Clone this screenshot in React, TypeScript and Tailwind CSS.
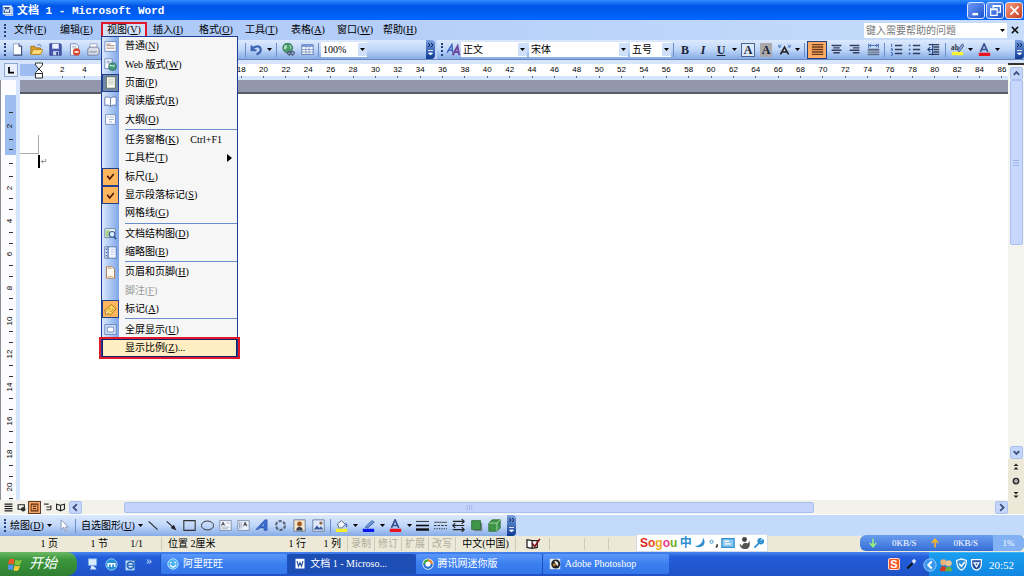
import React from "react";

type Kids = { children?: React.ReactNode };

/** Menu style label: an access key written "(X)" is drawn with its letter underlined. */
function Label({ text }: { text: string }) {
  const key = text.match(/^(.*\()([A-Z])(\).*)$/);
  return (
    <span className="whitespace-pre">
      {key ? (
        <>
          {key[1]}
          <u>{key[2]}</u>
          {key[3]}
        </>
      ) : (
        text
      )}
    </span>
  );
}

function Ico({ children, className = "size-[13px]" }: Kids & { className?: string }) {
  return (
    <svg viewBox="0 0 16 16" className={`${className} shrink-0`} fill="none" stroke="none" aria-hidden="true">
      {children}
    </svg>
  );
}

const sheet = <path d="M3 1h7l3 3v11H3z" fill="#fff" stroke="#5a76a8" />;
const lines = (ys: number[], x1 = 2, x2 = 14, c = "#333f5c") => (
  <path d={ys.map((y) => `M${x1} ${y}H${x2}`).join("")} stroke={c} strokeWidth="1.8" />
);

const icons: Record<string, React.ReactNode> = {
  newDoc: <><path d="M3 1h7l3 3v11H3z" fill="#fff" stroke="#8798bd" /><path d="M10 1v3h3v11H3" stroke="#3c4f80" strokeWidth="1.4" /></>,
  open: <><path d="M1 4h5l1 2h6v8H1z" fill="#e0a02c" stroke="#9c6a14" /><path d="M4 8h12l-3 6H1z" fill="#ffdc78" stroke="#b07c1c" /><path d="M9 3c2-2 4-1 5 1" stroke="#35558f" /></>,
  save: <><path d="M1 1h13l1 1v13H1z" fill="#4858ac" stroke="#2c3a84" /><path d="M4 1h8v6H4z" fill="#eef2ff" /><path d="M5 10h7v5H5z" fill="#c9d2ee" /><path d="M9 11h2v4H9z" fill="#2c3a84" /></>,
  deny: <>{sheet}<path d="M5 4h5M5 6h6" stroke="#9ab" /><circle cx="10.500" cy="11" r="4.500" fill="#d8472b" /><path d="M8 11h5" stroke="#fff" strokeWidth="2" /></>,
  print: <><path d="M4 1h8l1 6H3z" fill="#fff" stroke="#8b95b1" /><path d="M1 7l3-2h9l2 3v5l-3 2H1z" fill="#d9dde8" stroke="#69738f" /><path d="M3 11h9" stroke="#69738f" /></>,
  undo: <path d="M2 3v6h6M2 9c3-6 10-6 11-2s-2 6-5 7" stroke="#3c63b0" strokeWidth="2.600" />,
  globe: <><circle cx="7" cy="6" r="6" fill="#4c9d6c" stroke="#2b6448" /><path d="M3 3c3-2 4 1 3 3S3 8 2 7M9 2c3 1 3 4 2 6" fill="#a9dfbc" /><path d="M6 12l3-2 3 2-3 3zM10 12l3-2 3 2-3 3z" stroke="#555f80" strokeWidth="1.500" /></>,
  table: <><path d="M1 2h14v12H1z" fill="#fff" stroke="#4b6ba8" /><path d="M1 2h14v3H1z" fill="#7c9cd8" /><path d="M1 8h14M1 11h14M6 5v9M10 5v9" stroke="#7690c0" /></>,
  styles: <><path d="M0 12L6 2l1 10M2 9h5" stroke="#3f66c1" strokeWidth="1.800" /><path d="M7 15l6-11 2 11M9 11h5" stroke="#6d4ba0" strokeWidth="2.400" /></>,
  scale: <><path d="M3 14l5-9 5 9M5 11h6" stroke="#222" strokeWidth="2" /><path d="M1 5l3-3M15 5l-3-3M1 2v3h3M15 2v3h-3" stroke="#3768bb" /></>,
  justify: lines([2, 5, 8, 11, 14], 1, 15, "#6b3d1c"),
  center: <>{lines([3, 9])}{lines([6, 12], 4, 12)}</>,
  right: <>{lines([3, 9])}{lines([6, 12], 6, 14)}</>,
  distribute: <><path d="M2 1v5M14 1v5M3 3h10M5 1L3 3l2 2M11 1l2 2-2 2" stroke="#2f57a5" /><path d="M1 7h14v8H1z" fill="#596987" /><path d="M1 10h14M1 12.500h14" stroke="#c7d4ec" /></>,
  numbered: <>{lines([3, 8, 13], 6, 15)}<path d="M2 1v4M1 7h2v2H1M1 12h2v3H1" stroke="#2f57a5" /></>,
  bullets: <>{lines([3, 8, 13], 6, 15)}<path d="M1 2h2v2H1zM1 7h2v2H1zM1 12h2v2H1z" fill="#2f57a5" /></>,
  indent: <>{lines([2, 14], 2, 15)}{lines([5, 8, 11], 8, 15)}<path d="M7 8H1M4 5L1 8l3 3M7 1v14" stroke="#1f3b7c" strokeWidth="1.300" /></>,
  pointer: <path d="M5 1v12l3-3 2 5 2-1-2-4h4z" fill="#fff" stroke="#7b88a8" />,
  line: <path d="M2 3l11 10" stroke="#222" strokeWidth="1.300" />,
  arrow: <><path d="M2 3l9 8" stroke="#222" strokeWidth="1.300" /><path d="M14 14l-7-3 4-4z" fill="#222" /></>,
  rect: <path d="M1 2h14v12H1z" stroke="#333" strokeWidth="1.300" />,
  oval: <ellipse cx="8" cy="8" rx="7.500" ry="5.500" stroke="#333" strokeWidth="1.200" />,
  textBox: <><path d="M1 2h14v12H1z" fill="#f5f7fb" stroke="#7382a0" /><path d="M3 8l2-4 2 4M4 7h2" stroke="#223" /><path d="M9 5h4M3 10h10M3 12h8" stroke="#9ba7be" /></>,
  vText: <><path d="M1 2h14v12H1z" fill="#eef2fb" stroke="#7382a0" /><path d="M8 9l2-5 2 5M9 7h3" stroke="#223" /><path d="M3 4v8M5 4v8" stroke="#8996b4" /></>,
  wordArt: <path d="M1 13L12 1h3v13h-4v-3H6l-2 2zM8 9h3V5z" fill="#3a6bd0" stroke="#274c9b" strokeWidth=".6" />,
  diagram: <circle cx="8" cy="8" r="5.500" stroke="#5a6479" strokeWidth="2.600" strokeDasharray="4 1.700" />,
  clip: <><path d="M1 1h14v14H1z" fill="#f4e6c8" stroke="#61708f" /><circle cx="8" cy="6" r="3" fill="#a4551d" /><path d="M4 14c0-6 8-6 8 0z" fill="#3b3f52" /></>,
  picture: <><path d="M1 1h14v14H1z" fill="#dfe9fb" stroke="#61708f" /><path d="M2 13l4-5 3 3 2-2 3 4z" fill="#3a5a9c" /><circle cx="11" cy="5" r="2" fill="#8d6a3c" /></>,
  fill: <><path d="M3 6l5-4 5 5-5 4H5z" fill="#f3f6fc" stroke="#444e66" /><path d="M12 6c3 0 3 2 2 4" stroke="#3c6bc0" strokeWidth="1.500" /><path d="M1 12h14v4H1z" fill="#f7ee2c" /></>,
  lineColor: <><path d="M4 10l8-8 3 2-8 7z" fill="#6d9be0" stroke="#334f8f" /><path d="M1 12h14v4H1z" fill="#0a18f0" /></>,
  fontColor: <><path d="M3 11L7.500 1 12 11M5 8h5" stroke="#35508f" strokeWidth="2" /><path d="M1 12h14v4H1z" fill="#e8131c" /></>,
  weights: <><path d="M0 3h16" stroke="#111" /><path d="M0 8h16" stroke="#111" strokeWidth="2" /><path d="M0 13h16" stroke="#111" strokeWidth="3" /></>,
  dashes: <><path d="M0 4h16" stroke="#333" /><path d="M0 8h16" stroke="#333" strokeWidth="1.500" strokeDasharray="3 1.500" /><path d="M0 12h16" stroke="#333" strokeWidth="1.500" strokeDasharray="1.500 1.500" /></>,
  arrows: <path d="M1 3h14M12 0l3 3-3 3M15 8H1M4 5L1 8l3 3M1 13h14M12 10l3 3-3 3" stroke="#222" strokeWidth="1.400" />,
  shadow: <><path d="M5 5h10v10H5z" fill="#7b8090" /><path d="M2 2h11v11H2z" fill="#3f9548" stroke="#2b6b34" /></>,
  cube: <><path d="M1 5l4-4h10v10l-4 4H1z" fill="#3f9548" stroke="#2b6b34" /><path d="M1 5h10v10M11 5l4-4" stroke="#b6e2b4" /></>,
  highlighter: <><path d="M8 9l6-8 2 2-6 8z" fill="#8fa8d8" stroke="#3d4f7c" /><path d="M1 11h14v4H1z" fill="#faf32d" /><text x="0" y="9" fontSize="9" fontWeight="700" fill="#333">ab</text></>,
  normal: <><path d="M1 2h14v12H1z" fill="#fff" stroke="#5f7fb8" /><path d="M3 5h5M3 7h10M3 10h10" stroke="#8b6a5c" /></>,
  web: <><path d="M1 1h9v12H1z" fill="#fff" stroke="#5f7fb8" /><path d="M3 4h5M3 6h4" stroke="#6b88bc" /><circle cx="10.500" cy="10.500" r="4.800" fill="#4a9a80" stroke="#2a6a68" /><path d="M7 10c2-3 4 2 6-1" stroke="#c2ead0" strokeWidth="1.500" /></>,
  printView: <><path d="M3 1h11v14H3z" fill="#f7f8ee" stroke="#5d6b58" /><path d="M5 4h7M5 6h7M5 8h7M5 10h7" stroke="#c2c9bb" /></>,
  book: <><path d="M8 4C6 2 3 2 1 3v10c2-1 5-1 7 1 2-2 5-2 7-1V3c-2-1-5-1-7 1z" fill="#fff" stroke="#50699c" /><path d="M8 4v10" stroke="#50699c" /></>,
  outline: <><path d="M2 2h12v12H2z" fill="#fff" stroke="#6680b4" /><path d="M4 5h2M7 5h5M6 8h6M6 11h4" stroke="#8aa0c8" /></>,
  docMap: <><path d="M1 2h13v11H1z" fill="#f2f8ee" stroke="#5c7cab" /><path d="M2 4h5v8H2z" fill="#a9cf8c" /><circle cx="10" cy="9" r="3.500" fill="#dcecff" stroke="#375c99" strokeWidth="1.300" /><path d="M12 12l3 3" stroke="#375c99" strokeWidth="2" /></>,
  thumbs: <><path d="M1 1h14v14H1z" fill="#f3f7ff" stroke="#4568a8" /><path d="M5 1v14M3 3v2M3 7v2M3 11v2" stroke="#4568a8" strokeWidth="1.500" /><path d="M8 4h5M8 7h5M8 10h5" stroke="#b3c5e6" /></>,
  header: <><path d="M3 1h7l3 3v11H3z" fill="#fffaf0" stroke="#a5682f" /><path d="M5 3h4M5 13h6" stroke="#d09b6c" /></>,
  markup: <><path d="M1 9l8-7 6 5-7 8z" fill="#ffd560" stroke="#99661d" /><path d="M5 9l3-3M8 11l4-4" stroke="#99661d" /><path d="M1 9l1 5 4-1" fill="#fff3c0" stroke="#99661d" /></>,
  full: <><path d="M1 2h14v12H1z" fill="#d7e5fd" stroke="#5678b5" /><path d="M4 5h8v6H4z" fill="#fff" stroke="#5678b5" /></>,
  check: <path d="M4 7l3 4 5-6" stroke="#4a1608" strokeWidth="2" />,
};

function Tool({ name, className = "w-[18px]", title }: { name: string; className?: string; title?: string }) {
  return (
    <button type="button" aria-label={title ?? name} className={`flex h-full shrink-0 items-center justify-center ${className}`}>
      <Ico>{icons[name]}</Ico>
    </button>
  );
}

function Letter({ children, className = "w-[18px]" }: Kids & { className?: string }) {
  return (
    <button type="button" className={`flex h-[14px] shrink-0 items-center justify-center text-[12px] leading-none font-bold text-[#1a2238] ${className}`}>
      {children}
    </button>
  );
}

const Caret = ({ className = "w-[9px]" }: { className?: string }) => (
  <svg viewBox="0 0 9 5" className={`h-[5px] shrink-0 ${className}`} aria-hidden="true">
    <path d="M2 1h5L4.500 4z" fill="#000" />
  </svg>
);
const Sep = () => <span className="mx-[2px] h-[14px] w-px shrink-0 bg-[#6a8ccb]" />;
const Grip = () => <span className="mr-[2px] ml-1 h-[13px] w-0 shrink-0 border-l-2 border-dotted border-[#27417f]" />;

function EndCap() {
  return (
    <button type="button" aria-label="工具栏选项" className="flex h-full w-[9px] shrink-0 flex-col items-center justify-between rounded-r-sm bg-linear-to-b from-[#7aa0e0] to-[#0b3a92] py-[3px]">
      <svg viewBox="0 0 7 5" className="h-[5px] w-[7px]" fill="none" aria-hidden="true">
        <path d="M1 0l2 2-2 2M4 0l2 2-2 2" stroke="#10275e" />
      </svg>
      <svg viewBox="0 0 7 6" className="h-[6px] w-[7px]" aria-hidden="true">
        <path d="M1 .5h5M1.500 3h4L3.500 5z" stroke="#fff" strokeWidth=".8" fill="#fff" />
      </svg>
    </button>
  );
}

function Combo({ label, value, className }: { label: string; value: string; className: string }) {
  return (
    <span className={`relative flex h-[15px] shrink-0 items-center bg-white ${className}`}>
      <select aria-label={label} defaultValue={value} className="size-full appearance-none bg-transparent pl-[2px] text-[10px] leading-[15px]">
        <option>{value}</option>
      </select>
      <span className="pointer-events-none absolute right-0 flex h-[13px] w-[9px] items-center bg-[#cfe0fb]">
        <Caret />
      </span>
    </span>
  );
}

const winBtn = "flex h-[17px] w-[18px] items-center justify-center rounded-[3px] border border-[#d9e6ff]";

function TitleBar() {
  return (
    <header className="flex h-5 shrink-0 items-center bg-linear-to-b from-[#2e8bff] via-[#0055e6] via-30% to-[#0066ff] pr-px pl-[2px] text-white">
      <svg viewBox="0 0 16 16" className="size-[12px]" aria-hidden="true">
        <path d="M1 2h12v12H1z" fill="#fff" />
        <path d="M2 4h9v8H2z" fill="#2b579a" />
        <path d="M3 5l2 6 1.500-4L8 11l2-6" fill="none" stroke="#fff" strokeWidth="1.300" />
        <path d="M14 4v11H4" fill="none" stroke="#b9c9e8" strokeWidth="2" />
      </svg>
      <h1 className="ml-[3px] flex-1 pt-[2px] font-['Liberation_Mono','Noto_Sans_CJK_SC',monospace] text-[11px] leading-none font-bold whitespace-pre">文档 1 - Microsoft Word</h1>
      <div className="flex gap-px">
        <button type="button" aria-label="最小化" className={`${winBtn} bg-linear-to-br from-[#6f9bf5] to-[#1c4fd0]`}>
          <Ico><path d="M3 11h7v3H3z" fill="#fff" /></Ico>
        </button>
        <button type="button" aria-label="还原" className={`${winBtn} bg-linear-to-br from-[#6f9bf5] to-[#1c4fd0]`}>
          <Ico><path d="M5 5V2h9v8h-3M2 6h8v8H2zM2 7h8M5 3h9" stroke="#fff" strokeWidth="1.500" /></Ico>
        </button>
        <button type="button" aria-label="关闭" className={`${winBtn} bg-linear-to-br from-[#f19a7a] to-[#c9371a]`}>
          <Ico><path d="M3 3l10 10M13 3L3 13" stroke="#fff" strokeWidth="2.200" /></Ico>
        </button>
      </div>
    </header>
  );
}

type Item = { t: string; icon?: string; key?: string; sub?: boolean; on?: boolean; pressed?: boolean; off?: boolean; hot?: boolean };
const viewMenu: Item[][] = [
  [{ t: "普通(N)", icon: "normal" }, { t: "Web 版式(W)", icon: "web" }, { t: "页面(P)", icon: "printView", pressed: true }, { t: "阅读版式(R)", icon: "book" }, { t: "大纲(O)", icon: "outline" }],
  [{ t: "任务窗格(K)", key: "Ctrl+F1" }, { t: "工具栏(T)", sub: true }, { t: "标尺(L)", icon: "check", on: true }, { t: "显示段落标记(S)", icon: "check", on: true }, { t: "网格线(G)" }],
  [{ t: "文档结构图(D)", icon: "docMap" }, { t: "缩略图(B)", icon: "thumbs" }],
  [{ t: "页眉和页脚(H)", icon: "header" }, { t: "脚注(F)", off: true }, { t: "标记(A)", icon: "markup", on: true }],
  [{ t: "全屏显示(U)", icon: "full" }, { t: "显示比例(Z)...", hot: true }],
];

function MenuRow({ item }: { item: Item }) {
  const box = item.on ? "border border-[#22408c] bg-[#ffb65c]" : item.pressed ? "border border-[#22408c] bg-[#6f87a8]" : "";
  return (
    <button type="button" role="menuitem" disabled={item.off} className={`relative flex flex-1 items-center text-left ${item.off ? "text-[#9a9a9a]" : ""}`}>
      {item.hot && (
        <>
          <span className="absolute inset-0 border border-[#10206b] bg-[#ffeec2]" />
          <span className="absolute -inset-x-[3px] -top-[2px] -bottom-[2px] border-2 border-[#e0182c]" />
        </>
      )}
      <span className={`flex h-full w-[17px] shrink-0 items-center justify-center ${box}`}>{item.icon && <Ico className="size-[13px]">{icons[item.icon]}</Ico>}</span>
      <span className="relative ml-[6px] flex flex-1 items-center">
        <Label text={item.t} />
        {item.key && <span className="mr-[15px] ml-auto flex"><Label text={item.key} /></span>}
        {item.sub && (
          <svg viewBox="0 0 5 8" className="mr-[5px] ml-auto h-2 w-[5px]" aria-hidden="true">
            <path d="M0 0l5 4-5 4z" />
          </svg>
        )}
      </span>
    </button>
  );
}

function ViewMenu() {
  return (
    <div role="menu" aria-label="视图" className="absolute top-[14px] left-0 z-20 flex h-[322px] w-[137px] flex-col border border-[#1c3f95] bg-[#f6f6f6] bg-linear-to-r from-[#dbe8fd] via-[#7fa6e8] via-[17px] to-[#f6f6f6] to-[17px] text-black">
      {viewMenu.map((group, g) => (
        <React.Fragment key={g}>
          {g > 0 && <div role="separator" className="ml-[23px] h-[2px] border-t border-[#6a8ccb]" />}
          {group.map((item) => <MenuRow key={item.t} item={item} />)}
        </React.Fragment>
      ))}
    </div>
  );
}

const menus = ["文件(F)", "编辑(E)", "视图(V)", "插入(I)", "格式(O)", "工具(T)", "表格(A)", "窗口(W)", "帮助(H)"];

function MenuBar() {
  return (
    <nav className="flex h-5 shrink-0 items-center bg-linear-to-r from-[#a9c6f6] to-[#c8ddfb] pr-1">
      <Grip />
      {menus.map((m) =>
        m.startsWith("视图") ? (
          <div key={m} className="relative z-20 ml-px h-4">
            <button type="button" aria-expanded="true" className="flex h-4 w-[46px] items-center border-2 border-[#e0182c] bg-[#d3e1f8] pl-1">
              <Label text={m} />
            </button>
            <ViewMenu />
          </div>
        ) : (
          <button key={m} type="button" className="w-[46px] pl-[6px] text-left"><Label text={m} /></button>
        ),
      )}
      <span className="flex-1" />
      <div className="flex h-[15px] w-[143px] items-center bg-white">
        <input aria-label="帮助" placeholder="键入需要帮助的问题" className="h-full min-w-0 flex-1 pl-[2px] text-[10px] placeholder:text-[#777]" />
        <Caret />
      </div>
      <button type="button" aria-label="关闭文档" className="ml-[3px]">
        <Ico className="size-[10px]"><path d="M3 3l10 10M13 3L3 13" stroke="#111" strokeWidth="2.400" /></Ico>
      </button>
    </nav>
  );
}

const bar = "flex h-full items-center bg-linear-to-b from-[#dce9fd] via-[#c0d7f9] to-[#86abe6]";

function Toolbars() {
  return (
    <div className="flex h-5 shrink-0 gap-[2px] border-b border-[#6a87bd] bg-[#bcd3f8]">
      <div className={`${bar} w-[435px] shrink-0 rounded-r-sm`}>
        <Grip />
        {["newDoc", "open", "save", "deny", "print"].map((n) => <Tool key={n} name={n} className="w-[19px]" />)}
        <span className="w-[140px]" />
        <Sep />
        <Tool name="undo" className="w-[17px]" title="撤消" />
        <Caret />
        <Sep />
        <Tool name="globe" className="w-[19px]" title="超链接" />
        <Tool name="table" title="插入表格" />
        <Sep />
        <Combo label="显示比例" value="100%" className="w-[46px]" />
        <span className="flex-1" />
        <EndCap />
      </div>
      <div className={`${bar} min-w-0 flex-1`}>
        <Grip />
        <Tool name="styles" title="格式窗格" className="w-[16px]" />
        <Combo label="样式" value="正文" className="mr-[2px] w-[66px]" />
        <Combo label="字体" value="宋体" className="mr-[2px] w-[99px]" />
        <Combo label="字号" value="五号" className="w-[41px]" />
        <Sep />
        <Letter>B</Letter>
        <Letter className="w-[18px] italic">I</Letter>
        <Letter className="w-[18px] underline">U</Letter>
        <Caret />
        <Letter className="mx-[2px] w-[14px] border border-[#4d6395] bg-[#dce8fb]">A</Letter>
        <Letter className="mx-[3px] w-[12px] bg-[#a9a9a9]">A</Letter>
        <Tool name="scale" title="字符缩放" />
        <Caret />
        <Sep />
        <span className="flex h-[18px] shrink-0 items-center border border-[#22408c] bg-[#ffab63]">
          <Tool name="justify" title="两端对齐" />
        </span>
        <Tool name="center" title="居中" />
        <Tool name="right" title="右对齐" className="w-[19px]" />
        <Tool name="distribute" title="分散对齐" />
        <Sep />
        <Tool name="numbered" title="编号" />
        <Tool name="bullets" title="项目符号" />
        <Tool name="indent" title="增加缩进量" className="w-[20px]" />
        <Sep />
        <Tool name="highlighter" title="突出显示" />
        <Caret />
        <Tool name="fontColor" title="字体颜色" />
        <Caret />
        <span className="flex-1" />
        <EndCap />
      </div>
    </div>
  );
}

const hMarks = Array.from({ length: 43 }, (_, i) => (i + 1) * 2);
const vMarks = Array.from({ length: 10 }, (_, i) => (i + 1) * 2);
/** Ruler numbers that lie under the open drop-down are left blank. */
const underMenu = (n: number) => n >= 6 && n <= 16;

function TopRuler() {
  return (
    <div className="relative flex h-5 shrink-0 bg-[#d7e5fc]">
      <button type="button" aria-label="制表符" className="mt-[3px] ml-1 flex size-[14px] items-center justify-center border border-[#8da6d4] bg-[#eaf1fd]">
        <Ico className="size-2"><path d="M4 2v11h10" stroke="#000" strokeWidth="3.500" /></Ico>
      </button>
      <div className="mt-1 ml-[2px] h-[12px] w-[18px] shrink-0 bg-[#9dbcf0]" />
      <div className="min-w-0 flex-1 overflow-hidden">
        <div className="mt-1 h-[12px] bg-white" />
        <div className="-mt-[12px] -mr-[5px] ml-[13px] flex font-['Liberation_Sans',sans-serif] text-[8px] leading-[12px] text-black">
          {hMarks.map((n) => (
            <span key={n} className="flex h-[14px] w-0 flex-1 flex-col items-center justify-end">
              {!underMenu(n) && n}
              <i className="h-[2px] w-px bg-[#5b6b8f]" />
            </span>
          ))}
        </div>
      </div>
      <svg viewBox="0 0 10 17" className="absolute top-[2px] left-[34px] h-[17px] w-[10px]" aria-hidden="true">
        <path d="M1.500 1h7v2L5 7 1.500 3zM5 7l3.500 3.500V16h-7v-5.500zM1.500 11.500h7" fill="#fff" stroke="#333" />
      </svg>
    </div>
  );
}

function SideRuler() {
  return (
    <div className="flex w-5 shrink-0 flex-col overflow-hidden border-r-4 border-l border-r-[#d7e5fc] border-l-[#8b8f98] bg-[#fdfdff] pt-[15px] pl-1 font-['Liberation_Sans',sans-serif] text-[8px] leading-none text-black">
      <div className="flex h-[60px] shrink-0 flex-col items-center justify-around bg-[#9dbcf0] pt-3">
        <i className="h-px w-1 bg-[#333]" />
        <span className="-rotate-90">2</span>
        <i className="h-px w-1 bg-[#333]" />
        <i className="h-px w-1 bg-[#333]" />
      </div>
      <div className="flex h-[16px] shrink-0 items-center justify-center"><i className="h-px w-1 bg-[#333]" /></div>
      <div className="-mb-[4px] flex flex-1 flex-col">
        {vMarks.map((n) => (
          <div key={n} className="flex h-0 flex-1 flex-col items-center justify-between py-[5px]">
            <i className="h-px w-1 shrink-0 bg-[#333]" />
            <span className="-rotate-90">{n}</span>
            <i className="h-px w-1 shrink-0 bg-[#333]" />
          </div>
        ))}
      </div>
    </div>
  );
}

function Page() {
  return (
    <main className="min-w-0 flex-1 bg-white">
      <div className="h-[14px] border-b-2 border-[#5b5d66] bg-[#9297ad]" />
      <div className="mt-[41px] h-[19px] w-[19px] border-r border-b border-[#aaa]" />
      <p className="ml-[18px] flex h-[15px] items-center">
        <i className="h-[13px] w-[2px] bg-black" />
        <Ico className="size-[7px]"><path d="M13 2v6H3M7 4L3 8l4 4" stroke="#777" strokeWidth="1.800" /></Ico>
      </p>
    </main>
  );
}

const chevrons = { up: "M4 10l4-4 4 4", down: "M4 6l4 4 4-4", left: "M10 3L5 8l5 5", right: "M6 3l5 5-5 5" };
function ScrollBtn({ dir }: { dir: keyof typeof chevrons }) {
  return (
    <button type="button" aria-label={dir} className="flex h-[13px] w-[13px] shrink-0 items-center justify-center rounded-[2px] border border-[#a9c0f2] bg-[#c6d6fb]">
      <Ico className="size-[11px]"><path d={chevrons[dir]} stroke="#3a4f80" strokeWidth="2.600" /></Ico>
    </button>
  );
}

function SideScroll() {
  return (
    <div className="flex w-4 shrink-0 flex-col items-center bg-[#f5f5f0]">
      <i className="mb-[2px] h-[5px] w-full border-b-2 border-[#333] bg-[#d7e5fc]" />
      <ScrollBtn dir="up" />
      <div className="flex h-[165px] w-[13px] items-center justify-center rounded-[2px] border border-[#a9c0f2] bg-[#c8d7fc]">
        <Ico className="size-[8px]"><path d="M2 3h12M2 8h12M2 13h12" stroke="#9fb7ee" strokeWidth="2" /></Ico>
      </div>
      <span className="flex-1" />
      <ScrollBtn dir="down" />
      <div className="flex h-[55px] w-full flex-col items-center justify-start gap-[6px] bg-[#ece9d8] pt-1">
        <Ico className="size-2"><path d="M8 1l5 5H3zM8 8l5 5H3z" fill="#222" /></Ico>
        <Ico className="size-2"><circle cx="8" cy="8" r="5.500" fill="#aaa" stroke="#222" strokeWidth="2.500" /></Ico>
        <Ico className="size-2"><path d="M8 7l5-5H3zM8 14l5-5H3z" fill="#222" /></Ico>
      </div>
    </div>
  );
}

function BottomScroll() {
  const v = "flex h-[13px] w-[13px] shrink-0 items-center justify-center";
  return (
    <div className="flex h-[14px] shrink-0 items-center bg-[#f2f1ea] pl-[2px]">
      <button type="button" aria-label="普通视图" className={v}><Ico className="size-[9px]">{lines([2, 6, 10, 14], 1, 15, "#222")}</Ico></button>
      <button type="button" aria-label="Web 版式视图" className={v}><Ico className="size-[9px]"><path d="M2 3h11v8H2z" stroke="#222" strokeWidth="2" /><circle cx="11" cy="11" r="4" fill="#333" /></Ico></button>
      <button type="button" aria-label="页面视图" className={`${v} border border-[#5a3c2a] bg-[#f9a868]`}><Ico className="size-[9px]"><path d="M2 2h12v12H2zM5 6h6M5 10h6" stroke="#5b2d10" strokeWidth="1.800" /></Ico></button>
      <button type="button" aria-label="大纲视图" className={v}><Ico className="size-[9px]"><path d="M2 2h8M6 7h8M6 12h8M14 4v8" stroke="#333" strokeWidth="2" /></Ico></button>
      <button type="button" aria-label="阅读版式" className={v}><Ico className="size-[9px]"><path d="M8 4L1 2v9l7 3 7-3V2zM8 4v10" stroke="#222" strokeWidth="2" /></Ico></button>
      <span className="w-[2px]" />
      <ScrollBtn dir="left" />
      <div className="flex h-full min-w-0 flex-1 items-center pr-[181px] pl-[42px]">
        <div className="flex h-[11px] flex-1 items-center justify-center rounded-[2px] border border-[#a9c0f2] bg-[#c3d3fb]">
          <Ico className="size-[7px]"><path d="M3 2v12M8 2v12M13 2v12" stroke="#9fb7ee" strokeWidth="2" /></Ico>
        </div>
      </div>
      <ScrollBtn dir="right" />
    </div>
  );
}

function DrawingBar() {
  return (
    <div className="flex h-[22px] shrink-0 items-center border-t border-white bg-[#c4dafa]">
      <div className={`${bar} rounded-r-sm`}>
        <Grip />
        <button type="button" className="ml-[2px] flex items-center gap-px"><Label text="绘图(D)" /><Caret /></button>
        <Tool name="pointer" title="选择对象" className="w-[19px]" />
        <Sep />
        <button type="button" className="ml-[3px] flex items-center gap-px"><Label text="自选图形(U)" /><Caret /></button>
        {["line", "arrow", "rect", "oval", "textBox", "vText", "wordArt"].map((n) => <Tool key={n} name={n} />)}
        {["diagram", "clip", "picture"].map((n) => <Tool key={n} name={n} className="w-[19px]" />)}
        <Sep />
        {["fill", "lineColor", "fontColor"].map((n) => (
          <React.Fragment key={n}><Tool name={n} /><Caret /></React.Fragment>
        ))}
        {["weights", "dashes", "arrows", "shadow", "cube"].map((n) => <Tool key={n} name={n} />)}
        <span className="w-[3px]" />
        <EndCap />
      </div>
    </div>
  );
}

function StatusBar() {
  const cell = "border-r border-[#cfcbb8] text-center";
  return (
    <footer className="relative flex h-4 shrink-0 items-center bg-[#ece9d8] leading-[14px]">
      <span className="w-[58px] text-right"><Label text="1 页" /></span>
      <span className="w-[50px] text-right"><Label text="1 节" /></span>
      <span className="w-[35px] text-right"><Label text="1/1" /></span>
      <span className="ml-[18px] w-[119px] border-l border-[#cfcbb8] pl-[6px]"><Label text="位置 2厘米" /></span>
      <span className="w-[26px] text-right"><Label text="1 行" /></span>
      <span className="w-[42px] border-r border-[#cfcbb8] pr-[6px] text-right"><Label text="1 列" /></span>
      {["录制", "修订", "扩展", "改写"].map((t) => <span key={t} className={`${cell} w-[27px] text-[#b1ad9c]`}>{t}</span>)}
      <span className={`${cell} w-[60px]`}><Label text="中文(中国)" /></span>
      <span className={`${cell} flex w-[34px] justify-center`}>
        <svg viewBox="0 0 18 14" className="h-[12px] w-[16px]" fill="none" aria-hidden="true">
          <path d="M8 3L2 2v9l6 1 6-1V3zM8 3v9" fill="#fff" stroke="#222" strokeWidth="1.500" />
          <path d="M8 6l3 4 6-9" stroke="#861a1a" strokeWidth="2" />
        </svg>
      </span>
      <span className={`${cell} h-[12px] w-[35px]`} />
      <span className={`${cell} h-[12px] w-[24px]`} />
      <SogouBar />
      <NetMeter />
    </footer>
  );
}

function SogouBar() {
  return (
    <div className="absolute -top-[2px] left-[636px] flex h-[18px] w-[132px] items-center justify-between border border-[#d6dce6] bg-white px-[3px] text-[#2f8fd0]">
      <span className="font-['Liberation_Sans',sans-serif] text-[12px] leading-none font-bold">
        <span className="text-[#e01f16]">S</span><span className="text-[#e04a1c]">o</span><span className="text-[#f0a818]">g</span><span className="text-[#e83a8a]">o</span><span className="text-[#6fae25]">u</span>
      </span>
      <span className="text-[12px] leading-[14px] font-bold">中</span>
      <Ico className="size-[12px]"><path d="M12 1c6 8-2 16-11 11 6 0 11-4 11-11z" fill="#2f8fd0" /></Ico>
      <Ico className="size-[10px]"><circle cx="4" cy="6" r="2.500" stroke="#2f8fd0" strokeWidth="1.500" /><path d="M13 10v3l-2 2" stroke="#333" strokeWidth="2.500" /></Ico>
      <Ico className="size-[14px]"><path d="M1 3h14v10H1z" fill="#8cc8f0" stroke="#2f8fd0" strokeWidth="1.500" /><path d="M4 6h5M4 9h7" stroke="#fff" strokeWidth="1.500" /></Ico>
      <Ico className="size-[13px]"><circle cx="8" cy="3" r="3" fill="#444" /><path d="M2 8l3 3c1-4 5-5 7-3l2-3c1 4 1 7-2 9-3 2-10 1-10-6z" fill="#555" /></Ico>
      <Ico className="size-[11px]"><path d="M2 14l7-7M14 3l-3 3-2-2 2-3C8 1 7 4 8 6s4 3 6 1 1-4 0-4z" stroke="#2f8fd0" strokeWidth="2.500" /></Ico>
    </div>
  );
}

function NetMeter() {
  return (
    <div className="absolute -top-px right-0 flex h-4 w-[164px] items-center overflow-hidden rounded-md bg-linear-to-b from-[#6a9df0] to-[#346dd6] text-[9px] text-white">
      <Ico className="ml-2 size-[10px]"><path d="M8 1v12M3 8l5 6 5-6" stroke="#9cf07a" strokeWidth="2.500" /></Ico>
      <span className="ml-[14px]">0KB/S</span>
      <Ico className="ml-[13px] size-[10px]"><path d="M8 15V3M3 8l5-6 5 6" stroke="#ffb52b" strokeWidth="2.500" /></Ico>
      <span className="ml-[14px]">0KB/S</span>
      <span className="ml-auto flex h-full w-[31px] items-center justify-center bg-[#82b2f3]">1%</span>
    </div>
  );
}

function Task({ children, text, active }: Kids & { text: string; active?: boolean }) {
  return (
    <button type="button" className={`flex h-full min-w-0 flex-1 items-center gap-[4px] rounded-[2px] border-l border-[#1c4fc0] pl-[6px] text-white ${active ? "bg-[#1d4eb5]" : "bg-linear-to-b from-[#5b98fa] via-[#3a7ef0] to-[#3577ea]"}`}>
      {children}
      <Label text={text} />
    </button>
  );
}

function TaskBar() {
  return (
    <div className="flex h-6 shrink-0 items-center bg-linear-to-b from-[#4a86ee] via-[#245edb] via-20% to-[#1f52c6]">
      <button type="button" className="flex h-full w-[77px] shrink-0 items-center gap-[6px] rounded-r-[10px] bg-linear-to-b from-[#6cb865] via-[#3c983c] via-30% to-[#2f7f31] pl-2 text-white">
        <Ico className="size-[15px]">
          <path d="M1 3c2-2 4-1 6 0L6 8C4 7 2 7 0 8z" fill="#ee5a2c" />
          <path d="M8 3c2 1 4 1 7 0l-2 5c-2 1-4 1-6 0z" fill="#84c63c" />
          <path d="M0 9c2-1 4-1 6 0l-1 5c-2-1-4-1-6 0z" fill="#4f92ee" />
          <path d="M7 9c2 1 4 1 6 0l-2 5c-2 1-4 1-5 0z" fill="#fbcb3a" />
        </Ico>
        <span className="text-[14px] leading-none italic">开始</span>
      </button>
      <div className="flex w-[83px] shrink-0 items-center gap-[6px] pl-[9px]">
        <Ico><path d="M3 1h10v8H3z" fill="#dcedff" stroke="#7fb2ee" /><path d="M7 9l-2 5h8l-2-3z" fill="#d5e6fa" /></Ico>
        <Ico><circle cx="8" cy="8" r="7" fill="#238fd8" stroke="#a7dcff" /><path d="M4 11V7h4v4M8 7h4v4" stroke="#fff" strokeWidth="1.800" /></Ico>
        <Ico><path d="M2 3h11v12H2z" fill="#d9ecff" stroke="#5f9ce0" /><circle cx="8" cy="9" r="4" stroke="#2a6cb8" strokeWidth="2" /><path d="M5 9h7M10 3l5-2-2 5" stroke="#2a6cb8" strokeWidth="1.500" /></Ico>
        <span className="ml-[3px] -mt-2 text-[12px] leading-none text-[#cfe2ff]">»</span>
      </div>
      <div className="flex h-full w-[509px] py-[2px]">
        <Task text="阿里旺旺">
          <Ico className="size-[12px]"><circle cx="8" cy="8" r="7" fill="#4fb3f3" stroke="#d5efff" /><path d="M4 9c2 4 6 4 8 0M5 5v2M11 5v2" stroke="#fff" strokeWidth="1.800" /></Ico>
        </Task>
        <Task text="文档 1 - Microso..." active>
          <Ico className="size-[12px]"><path d="M2 1h12v13H2z" fill="#fff" /><path d="M4 4l2 7 2-5 2 5 2-7" stroke="#2b579a" strokeWidth="1.500" /></Ico>
        </Task>
        <Task text="腾讯网迷你版">
          <Ico className="size-[12px]"><circle cx="8" cy="8" r="7.500" fill="#fff" /><path d="M3 8a5 5 0 015-5" stroke="#39a63f" strokeWidth="3" /><path d="M8 3a5 5 0 015 5" stroke="#e8862a" strokeWidth="3" /><path d="M13 8a5 5 0 01-10 0" stroke="#2a6fd0" strokeWidth="3" /></Ico>
        </Task>
        <Task text="Adobe Photoshop">
          <Ico className="size-[12px]"><path d="M1 1h14v14H1z" fill="#dfe8f3" /><circle cx="9" cy="8" r="6" fill="#222" /><path d="M7 4c4 0 6 2 5 7l-3-3z" fill="#f2f2f2" /><circle cx="7" cy="9" r="2" fill="#b9802e" /></Ico>
        </Task>
      </div>
      <span className="flex-1" />
      <div className="flex items-center gap-[5px] pr-[12px]">
        <span className="flex size-[12px] items-center justify-center rounded-[2px] border border-[#ffd9c8] bg-[#ef5a28] font-['Liberation_Sans',sans-serif] text-[11px] leading-none font-bold text-white">S</span>
        <Ico className="size-[12px]"><path d="M3 14l7-7" stroke="#111" strokeWidth="2.500" /><path d="M9 4l3-3 3 3-3 4z" fill="#dfe6f5" /></Ico>
      </div>
      <div className="flex h-full items-center gap-[2px] border-t border-[#3db4f8] bg-linear-to-b from-[#1b9ef0] to-[#1187e2] pr-[10px] text-white">
        <button type="button" aria-label="隐藏图标" className="-ml-[6px]">
          <Ico className="size-[14px]"><circle cx="8" cy="8" r="7" fill="#3b96ee" stroke="#a9d6ff" /><path d="M10 4L6 8l4 4" stroke="#fff" strokeWidth="2.200" /></Ico>
        </button>
        <Ico className="size-[14px]"><circle cx="5" cy="5" r="3.500" fill="#e8b27c" /><circle cx="11" cy="6" r="3.500" fill="#f0c290" /><path d="M1 15c0-8 8-8 8 0z" fill="#d03d26" /><path d="M7 15c0-7 8-7 8 0z" fill="#6fae3c" /></Ico>
        <Ico className="size-[13px]"><path d="M8 1l6 2c0 6-1 10-6 12C3 13 2 9 2 3z" fill="#2f8fd8" stroke="#fff" strokeWidth="1.500" /><path d="M5 7l3 3 4-5" stroke="#fff" strokeWidth="1.800" /></Ico>
        <Ico className="size-[13px]"><path d="M2 2h12v5c0 4-2 7-6 8-4-1-6-4-6-8z" fill="#2450a4" stroke="#fff" strokeWidth="1.500" /><path d="M5 6h6L8 11z" stroke="#fff" strokeWidth="1.500" /></Ico>
        <time className="ml-[4px] text-[11px]"><Label text="20:52" /></time>
      </div>
    </div>
  );
}

export default function App() {
  return (
    <div className="flex h-screen w-full flex-col overflow-hidden bg-[#c4dafa] font-['Liberation_Serif','Noto_Sans_CJK_SC',serif] text-[10px] leading-[14px] text-black">
      <TitleBar />
      <MenuBar />
      <Toolbars />
      <div className="flex min-h-0 flex-1">
        <div className="flex min-w-0 flex-1 flex-col">
          <TopRuler />
          <div className="flex min-h-0 flex-1">
            <SideRuler />
            <Page />
          </div>
          <BottomScroll />
        </div>
        <SideScroll />
      </div>
      <DrawingBar />
      <StatusBar />
      <TaskBar />
    </div>
  );
}
